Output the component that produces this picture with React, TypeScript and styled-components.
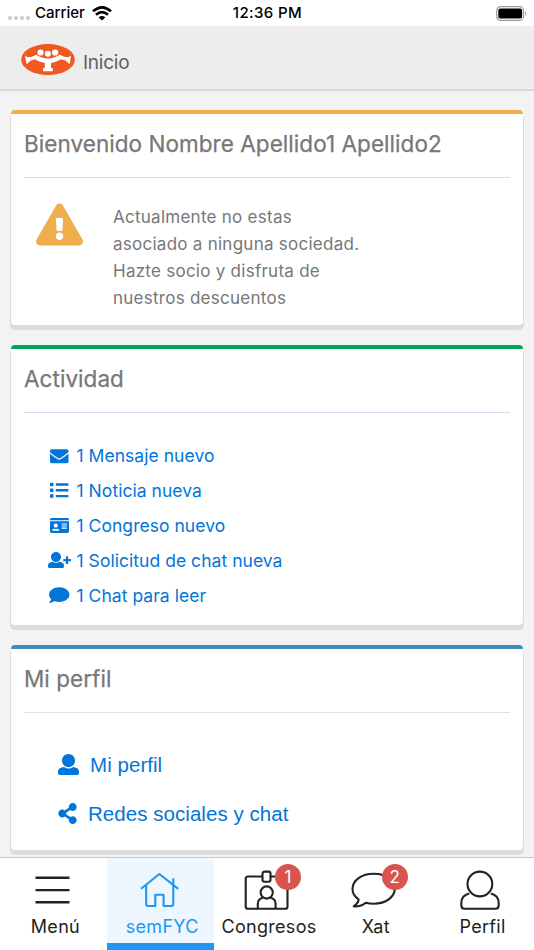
import React from "react";
import styled, { createGlobalStyle } from "styled-components";
import {
  FaEnvelope,
  FaExclamationTriangle,
  FaIdCard,
  FaList,
  FaShareAlt,
} from "react-icons/fa";

const GlobalStyle = createGlobalStyle`
  *, *::before, *::after { box-sizing: border-box; }
  html, body { margin: 0; padding: 0; overflow: hidden; }
  body { font-family: Inter, "Liberation Sans", sans-serif; background: #f3f3f3; }
`;

const Screen = styled.div`
  width: 100%;
  height: 100vh;
  display: flex;
  flex-direction: column;
  overflow: hidden;
  background: #f3f3f3;
`;

const StatusBar = styled.div`
  flex: none;
  height: 26px;
  display: grid;
  grid-template-columns: 1fr auto 1fr;
  align-items: center;
  padding: 0 7px 0 8px;
  background: #fff;
  color: #000;
  font-size: 15px;
  font-weight: 500;
  line-height: 26px;
`;

const StatusLeft = styled.div`
  display: flex;
  align-items: center;
`;

const SignalDots = styled.div`
  display: flex;
  gap: 2px;
  margin: 9px 5px 0 0;
`;

const Dot = styled.span`
  width: 4px;
  height: 4px;
  border-radius: 50%;
  background: #cbcbcb;
`;

const WifiIcon = styled.svg`
  margin-left: 7px;
`;

const Clock = styled.div`
  letter-spacing: 0.4px;
`;

const StatusRight = styled.div`
  display: flex;
  justify-content: flex-end;
`;

const Header = styled.header`
  flex: none;
  height: 65px;
  display: flex;
  align-items: center;
  gap: 8px;
  padding-left: 21px;
  background: #ededed;
  border-bottom: 2px solid #d8d8d8;
`;

const Logo = styled.svg`
  margin-top: 3px;
`;

const HeaderTitle = styled.h1`
  margin: 9px 0 0;
  color: #5b6066;
  font-size: 19px;
  font-weight: 400;
  letter-spacing: -0.25px;
`;

const Content = styled.main`
  flex: 1;
  min-height: 0;
  padding: 19px 11px 0;
  overflow: hidden;
`;

const Card = styled.section<{ $accent: string; $height: number }>`
  height: ${(p) => p.$height}px;
  margin-bottom: 19.5px;
  padding: 0 13px;
  background: #fff;
  border-top: 4px solid ${(p) => p.$accent};
  border-radius: 4px;
  box-shadow: 0 5px 0 #dcdcdc, -1px 4px 0 #dcdcdc, 1px 4px 0 #dedede;
`;

const CardTitle = styled.h2<{ $rule: string }>`
  height: 64px;
  margin: 0;
  color: #777;
  font-size: 22.5px;
  font-weight: 400;
  line-height: 60px;
  letter-spacing: 0.05px;
  -webkit-text-stroke: 0.25px #777;
  border-bottom: 1px solid ${(p) => p.$rule};
`;

const Notice = styled.div`
  display: flex;
  align-items: flex-start;
  gap: 30px;
  padding: 23px 0 0 12px;
  color: #f0ad4e;
`;

const NoticeText = styled.p`
  width: 260px;
  margin: 3px 0 0;
  color: #777;
  font-size: 17px;
  line-height: 27px;
  letter-spacing: 0.26px;
`;

const ActivityList = styled.ul`
  margin: 0;
  padding: 25.8px 0 0 24px;
  list-style: none;
`;

const ActivityItem = styled.li`
  display: flex;
  align-items: center;
  height: 34.8px;
  color: #0275d8;
  font-size: 17.5px;
  letter-spacing: 0.04px;
`;

const IconSlot = styled.span`
  display: flex;
  align-items: center;
  justify-content: center;
  width: 23px;
  margin-right: 5.5px;

  svg { flex: none; }
`;

const ProfileList = styled.ul`
  margin: 0;
  padding: 27px 0 0 33.5px;
  list-style: none;
`;

const ProfileItem = styled.li`
  display: flex;
  align-items: center;
  height: 49px;
  color: #0275d8;
  font: 20.5px "Liberation Sans", Arial, sans-serif;
  letter-spacing: 0.05px;
`;

const ProfileIcon = styled.span<{ $width: number; $pull?: number }>`
  display: flex;
  width: ${(p) => p.$width}px;

  svg { flex: none; margin-left: -${(p) => p.$pull ?? 0}px; }
`;

const ProfileLabel = styled.span`
  padding-top: 1px;
`;

const TabBar = styled.nav`
  flex: none;
  height: 93px;
  display: grid;
  grid-template-columns: repeat(5, 1fr);
  background: #fff;
  border-top: 1px solid #c9c9c9;
  position: relative;
  z-index: 1;
`;

const Tab = styled.div<{ $active?: boolean }>`
  display: flex;
  flex-direction: column;
  align-items: center;
  padding-top: 10px;
  color: ${(p) => (p.$active ? "#2196f3" : "#222")};
  background: ${(p) => (p.$active ? "#eef7ff" : "#fff")};
  border-bottom: 7px solid ${(p) => (p.$active ? "#2196f3" : "#fff")};
`;

const TabIcon = styled.div`
  position: relative;
  width: 48px;
  height: 44px;

  svg {
    display: block;
    fill: none;
    stroke: currentColor;
    stroke-width: 2.1;
    stroke-linejoin: round;
  }
`;

const TabLabel = styled.span`
  margin: 3px 0 0 4px;
  font-size: 18px;
  line-height: 23px;
  letter-spacing: 0.3px;
`;

const Badge = styled.span`
  position: absolute;
  top: -4px;
  left: 32px;
  width: 26px;
  height: 26px;
  border-radius: 50%;
  background: #d9534f;
  color: #fff;
  font: 400 17px/26px Inter, sans-serif;
  text-align: center;
`;

const PERSON_PATH =
  "M256 0c88.366 0 160 71.634 160 160s-71.634 160-160 160S96 248.366 96 160 167.634 0 256 0zm183.283 333.821l-71.313-17.828c-74.923 53.890-165.738 41.864-223.940 0l-71.313 17.828C29.981 344.505 0 382.903 0 426.955V464c0 26.510 21.490 48 48 48h416c26.510 0 48-21.490 48-48v-37.045c0-44.052-29.981-82.450-72.717-93.134z";

const PersonIcon = () => (
  <svg width="21" height="21" viewBox="0 0 512 512" fill="currentColor">
    <path d={PERSON_PATH} />
  </svg>
);

const PersonAddIcon = () => (
  <svg width="23" height="16" viewBox="0 0 736 512" fill="currentColor">
    <path d={PERSON_PATH} />
    <path d="M576 136h68v88h88v68h-88v88h-68v-88h-88v-68h88z" />
  </svg>
);

const CommentIcon = () => (
  <svg width="20.5" height="18.2" viewBox="0 0 576 512" fill="currentColor">
    <path d="M576 240c0 115-129 208-288 208-48.3 0-93.9-8.6-133.9-23.8-40.3 31.2-89.8 50.3-142.4 55.7-5.2.6-10.2-2.8-11.5-7.7-1.3-5 2.7-8.1 6.6-11.8 19.3-18.4 42.7-32.8 51.9-94.6C21.9 330.9 0 287.3 0 240 0 125.1 129 32 288 32s288 93.1 288 208z" />
  </svg>
);

const activity = [
  { icon: <FaEnvelope size={18.5} />, label: "1 Mensaje nuevo" },
  { icon: <FaList size={18.5} />, label: "1 Noticia nueva" },
  { icon: <FaIdCard size={19} />, label: "1 Congreso nuevo" },
  { icon: <PersonAddIcon />, label: "1 Solicitud de chat nueva" },
  { icon: <CommentIcon />, label: "1 Chat para leer" },
];

const tabs = [
  {
    label: "Menú",
    icon: <path d="M6.5 9.7h34M6.5 22.1h34M6.5 34.2h34" strokeWidth="2.4" />,
  },
  {
    label: "semFYC",
    active: true,
    icon: (
      <path d="M5 20.8 23.4 6 42.2 20.8M10.2 17.3v19q0 1.7 1.7 1.7h7.4V26.7h8.3V38h8q1.7 0 1.7-1.7V10.3" />
    ),
  },
  {
    label: "Congresos",
    badge: "1",
    icon: (
      <>
        <path d="M19.3 8.5H5Q2.7 8.5 2.7 11v27.5q0 2.3 2.3 2.3h37.2q2.3 0 2.3-2.3V11q0-2.5-2.3-2.5H27.5" />
        <rect x="19.5" y="3.6" width="8" height="10.2" rx="2" />
        <circle cx="23.7" cy="24.5" r="6.1" />
        <path d="M14.8 40.5v-4.5q0-5.3 5-6.3M27.6 29.7q5 1 5 6.3v4.5" />
      </>
    ),
  },
  {
    label: "Xat",
    badge: "2",
    icon: (
      <path d="M23.8 5.8C11.8 5.8 2.5 12.3 2.5 20.7c0 4.7 2.2 8 5.9 10.4.7 2.6-1.5 5-4.700 7.200 5.500.3 9.300-1.200 12-3.600 3 .8 5.500 1 8.100 1 11.900 0 21-6.500 21-15.100S35.700 5.800 23.800 5.800z" />
    ),
  },
  {
    label: "Perfil",
    icon: (
      <>
        <circle cx="22.9" cy="16" r="12.4" />
        <path d="M12.2 25.5C7 26.7 4.3 30 4.3 35v2.6q0 3.2 3.3 3.2h30.8q3.3 0 3.3-3.2V35c0-5-2.7-8.3-7.9-9.5" />
      </>
    ),
  },
];

export default function App() {
  return (
    <Screen>
      <GlobalStyle />
      <StatusBar>
        <StatusLeft>
          <SignalDots>
            <Dot />
            <Dot />
            <Dot />
            <Dot />
          </SignalDots>
          Carrier
          <WifiIcon width="20" height="15" viewBox="0 0 20 15">
            <path d="M1 5.3q9-7.8 18 0M4 8.7q6-5 12 0" fill="none" stroke="#000" strokeWidth="2.7" />
            <path d="M10 14.5 6.6 11.2q3.4-2.6 6.8 0z" />
          </WifiIcon>
        </StatusLeft>
        <Clock>12:36 PM</Clock>
        <StatusRight>
          <svg width="31" height="15" viewBox="0 0 31 15">
            <rect x=".7" y=".7" width="26.8" height="13.6" rx="3.8" fill="#fff" stroke="#999" strokeWidth="1.2" />
            <rect x="2.3" y="2.5" width="23.8" height="10" rx="2" />
            <path d="M29 5q2 2.5 0 5z" fill="#999" />
          </svg>
        </StatusRight>
      </StatusBar>

      <Header>
        <Logo width="54" height="31" viewBox="0 0 54 31">
          <ellipse cx="27" cy="15.5" rx="26.8" ry="15.4" fill="#f05a22" />
          <g fill="#fff">
            <circle cx="19.6" cy="8.5" r="3.1" />
            <circle cx="26.9" cy="9.8" r="3" />
            <circle cx="34.1" cy="8.5" r="3.1" />
            <path d="M4 11.5 6.5 13.3 11 12.8 15.2 10.8Q20.5 14.5 26.9 14.5T38.800 10.800L43 12.800 47.500 13.300 50 11.500 48.600 20.200 44.600 16.500 39.800 15.300Q34.500 18.700 30 18.700v5.400h1.700v3.100h-9.600v-3.100h1.700v-5.400q-4.500 0-9.800-3.400l-4.200 1.200-4.200 3.700z" />
          </g>
        </Logo>
        <HeaderTitle>Inicio</HeaderTitle>
      </Header>

      <Content>
        <Card $accent="#f0ad4e" $height={215.2}>
          <CardTitle $rule="#d0dde5">Bienvenido Nombre Apellido1 Apellido2</CardTitle>
          <Notice>
            <FaExclamationTriangle size={47} height={42} />
            <NoticeText>
              Actualmente no estas
              <br />
              asociado a ninguna sociedad.
              <br />
              Hazte socio y disfruta de
              <br />
              nuestros descuentos
            </NoticeText>
          </Notice>
        </Card>

        <Card $accent="#00a65a" $height={280.8}>
          <CardTitle $rule="#d3dced">Actividad</CardTitle>
          <ActivityList>
            {activity.map(({ icon, label }) => (
              <ActivityItem key={label}>
                <IconSlot>{icon}</IconSlot>
                {label}
              </ActivityItem>
            ))}
          </ActivityList>
        </Card>

        <Card $accent="#3c8dbc" $height={205.3}>
          <CardTitle $rule="#dde2e8">Mi perfil</CardTitle>
          <ProfileList>
            <ProfileItem>
              <ProfileIcon $width={32.5}>
                <PersonIcon />
              </ProfileIcon>
              <ProfileLabel>Mi perfil</ProfileLabel>
            </ProfileItem>
            <ProfileItem>
              <ProfileIcon $width={30.5} $pull={1}>
                <FaShareAlt size={21} />
              </ProfileIcon>
              <ProfileLabel>Redes sociales y chat</ProfileLabel>
            </ProfileItem>
          </ProfileList>
        </Card>
      </Content>

      <TabBar>
        {tabs.map(({ label, active, badge, icon }) => (
          <Tab key={label} $active={active}>
            <TabIcon>
              <svg width="48" height="44" viewBox="0 0 48 44">
                {icon}
              </svg>
              {badge && <Badge>{badge}</Badge>}
            </TabIcon>
            <TabLabel>{label}</TabLabel>
          </Tab>
        ))}
      </TabBar>
    </Screen>
  );
}
